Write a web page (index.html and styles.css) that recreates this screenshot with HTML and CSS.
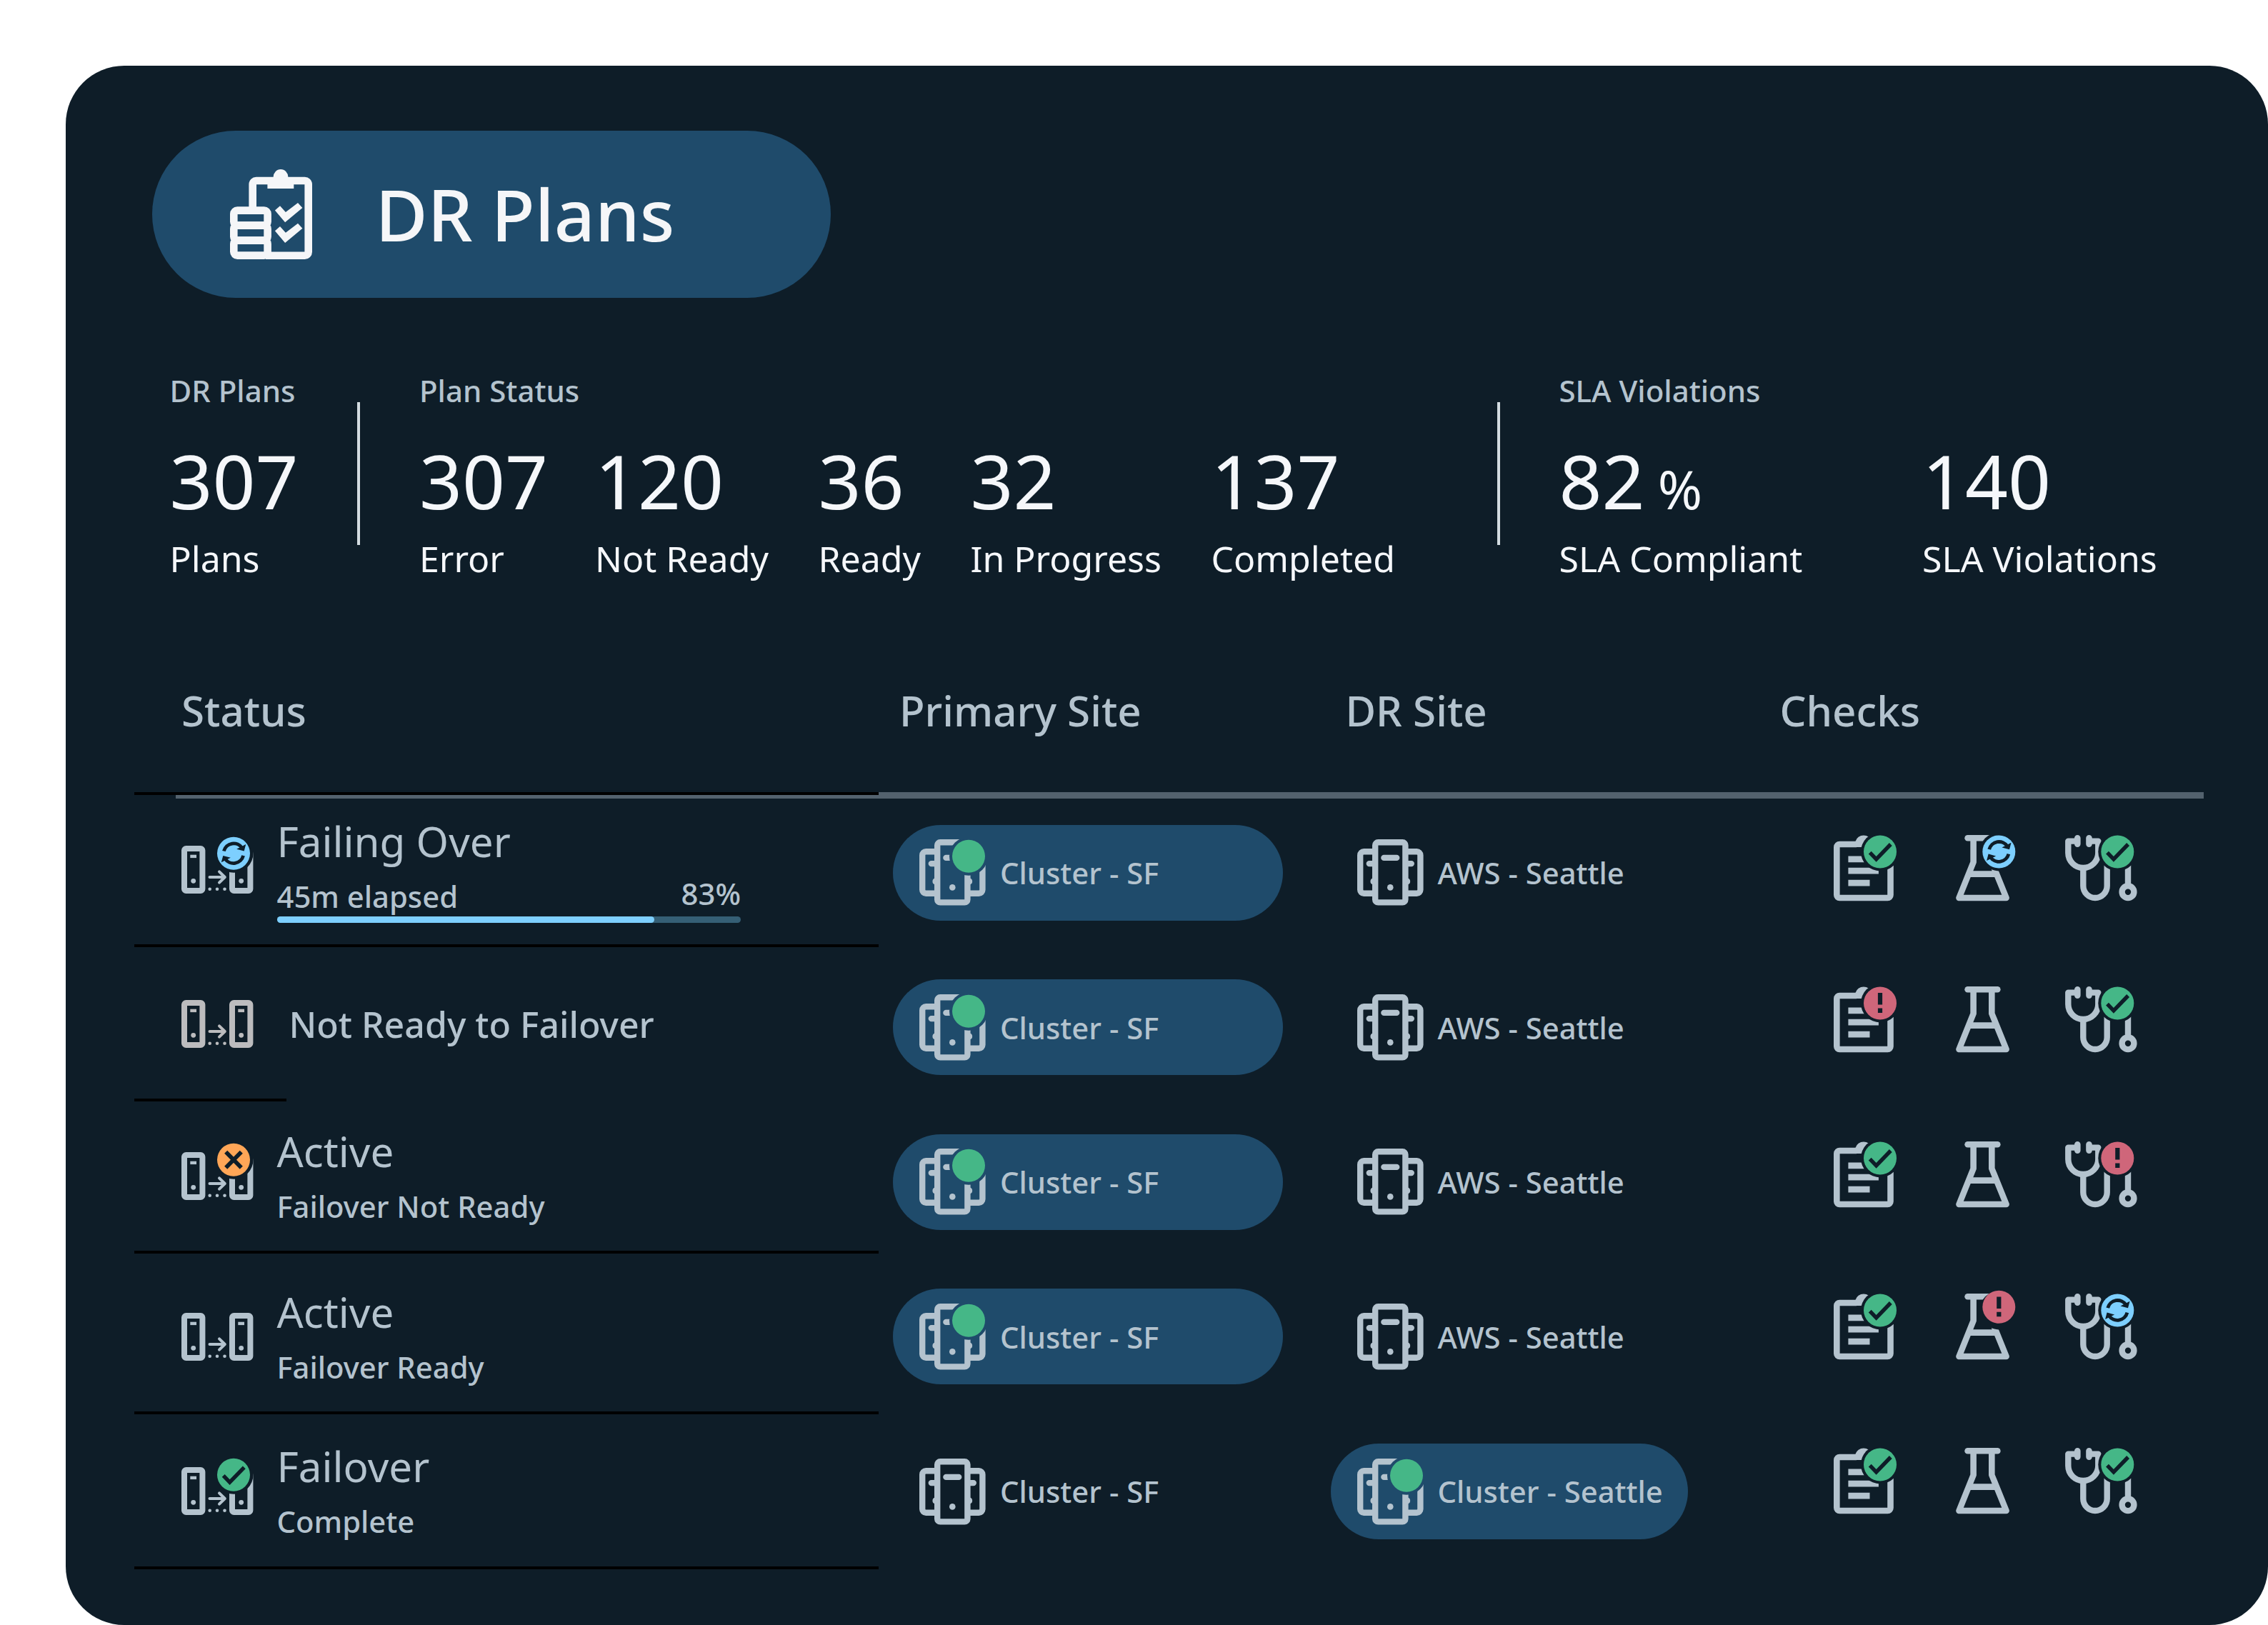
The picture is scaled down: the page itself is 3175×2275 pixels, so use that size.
FILE: index.html
```html
<!DOCTYPE html>
<html lang="en">
<head>
  <meta charset="UTF-8">
  <meta name="viewport" content="width=device-width, initial-scale=1.0">
  <title>DR Plans</title>
  <link rel="stylesheet" href="styles.css">
</head>
<body>
  <!-- icon definitions -->
  <svg class="defs" width="0" height="0">
    <defs>
      <mask id="cut-failover" maskUnits="userSpaceOnUse" x="-2" y="-16" width="106" height="90">
        <rect x="-2" y="-16" width="106" height="90" fill="white"/>
        <path d="M46.5 -16H104V-6L100.5 10.7A27 27 0 0 1 46.5 10.7Z" fill="black"/>
      </mask>
      <mask id="cut-cluster" maskUnits="userSpaceOnUse" x="-2" y="-2" width="98" height="98">
        <rect x="-2" y="-2" width="98" height="98" fill="white"/>
        <circle cx="69" cy="23.7" r="27" fill="black"/>
      </mask>
      <mask id="cut-clipboard" maskUnits="userSpaceOnUse" x="-2" y="-2" width="110" height="98">
        <rect x="-2" y="-2" width="110" height="98" fill="white"/>
        <circle cx="65" cy="23.4" r="27" fill="black"/>
      </mask>
      <mask id="cut-flask" maskUnits="userSpaceOnUse" x="-2" y="-2" width="110" height="98">
        <rect x="-2" y="-2" width="110" height="98" fill="white"/>
        <circle cx="60.3" cy="23.4" r="27" fill="black"/>
      </mask>
      <mask id="cut-steth" maskUnits="userSpaceOnUse" x="-2" y="-2" width="110" height="98">
        <rect x="-2" y="-2" width="110" height="98" fill="white"/>
        <circle cx="73.3" cy="23.4" r="27" fill="black"/>
      </mask>

      <g id="failover">
        <rect x="4" y="4" width="25.4" height="59" rx="2.5" fill="none" stroke="currentColor" stroke-width="8"/>
        <rect x="12.3" y="12.7" width="8.7" height="4.4" fill="currentColor"/>
        <circle cx="16.7" cy="49.3" r="3.4" fill="currentColor"/>
        <rect x="71" y="4" width="25.4" height="59" rx="2.5" fill="none" stroke="currentColor" stroke-width="8"/>
        <rect x="79.3" y="12.7" width="8.7" height="4.4" fill="currentColor"/>
        <circle cx="83.7" cy="49.3" r="3.4" fill="currentColor"/>
        <path d="M39.5 44H60M53 36.3L60.8 44L53 51.7" fill="none" stroke="currentColor" stroke-width="4" stroke-linecap="round" stroke-linejoin="round"/>
        <circle cx="39.7" cy="60.7" r="2.3" fill="currentColor"/>
        <circle cx="50" cy="60.7" r="2.3" fill="currentColor"/>
        <circle cx="60.5" cy="60.7" r="2.3" fill="currentColor"/>
      </g>
      <g id="cluster">
        <path d="M25 17.2H9.2A5 5 0 0 0 4.2 22.2V70.8A5 5 0 0 0 9.2 75.8H25M67.6 17.2H83.4A5 5 0 0 1 88.4 22.2V70.8A5 5 0 0 1 83.4 75.8H67.6" fill="none" stroke="currentColor" stroke-width="8.4"/>
        <rect x="25.2" y="4.2" width="42.2" height="84.2" rx="4" fill="none" stroke="currentColor" stroke-width="8.4"/>
        <rect x="33.2" y="21.7" width="26.2" height="8.4" rx="4.2" fill="currentColor"/>
        <circle cx="46.3" cy="67.4" r="4.3" fill="currentColor"/>
        <path d="M22 29.9H16.8A4.2 4.2 0 0 0 16.8 38.3H22ZM70.6 29.9H75.8A4.2 4.2 0 0 1 75.8 38.3H70.6ZM22 54.6A4.5 4.5 0 0 0 22 63.4ZM70.6 54.6A4.5 4.5 0 0 1 70.6 63.4Z" fill="currentColor"/>
      </g>
      <g id="clipboard">
        <path d="M32 13H8.4A4 4 0 0 0 4.3 17V84A4 4 0 0 0 8.4 88H75.4A4 4 0 0 0 79.5 84V17A4 4 0 0 0 75.4 13H50" fill="none" stroke="currentColor" stroke-width="8.6"/>
        <path d="M30.4 9A12 12 0 0 1 53.4 9V17H30Z" fill="currentColor"/>
        <path d="M20.4 33.8H62.9M20.4 50.2H62.9M20.4 67.1H50.5" fill="none" stroke="currentColor" stroke-width="8.8"/>
      </g>
      <g id="flask">
        <path d="M16.6 4.3H58.3" fill="none" stroke="currentColor" stroke-width="8.6" stroke-linecap="round"/>
        <path d="M24.6 4.3V38L4.5 88H70.6L50.3 38V4.3M20 54.6H55" fill="none" stroke="currentColor" stroke-width="8.6" stroke-linejoin="round"/>
      </g>
      <g id="steth">
        <path d="M17 8.6H4.3V25A21 21 0 0 0 46.3 25V8.6H33.6" fill="none" stroke="currentColor" stroke-width="8.4" stroke-linejoin="round"/>
        <path d="M17.3 4.3V12.6M33.5 4.3V12.6" fill="none" stroke="currentColor" stroke-width="8.6" stroke-linecap="round"/>
        <path d="M25.3 46V71.3A16.7 16.7 0 0 0 58.7 71.3V23A14.6 14.6 0 0 1 88 23V69" fill="none" stroke="currentColor" stroke-width="8.4"/>
        <circle cx="88" cy="79.7" r="8.4" fill="none" stroke="currentColor" stroke-width="8.4"/>
      </g>

      <g id="badge-ok">
        <circle r="23" fill="#45b787"/>
        <path d="M-14.3 1.2L-5.4 10.4L14.8 -10.4" fill="none" stroke="#0e1d28" stroke-width="5.4"/>
      </g>
      <g id="badge-alert">
        <circle r="23" fill="#cf667a"/>
        <path d="M0 -14.3V2.2M0 7V13.5" fill="none" stroke="#0e1d28" stroke-width="6.2"/>
      </g>
      <g id="badge-error">
        <circle r="23" fill="#ffa657"/>
        <path d="M-10.8 -11L10.8 11M10.8 -11L-10.8 11" fill="none" stroke="#0e1d28" stroke-width="5.8"/>
      </g>
      <g id="badge-sync">
        <circle r="23" fill="#7dcfff"/>
        <g id="sync-arrow">
          <path d="M-13.6 -3.2A14.2 14.2 0 0 1 12 -7.5" fill="none" stroke="#0e1d28" stroke-width="4.8"/>
          <path d="M17.2 -12.6L14.7 -3.2L4.2 -6Z" fill="#0e1d28"/>
        </g>
        <use href="#sync-arrow" transform="rotate(180)"/>
      </g>
    </defs>
  </svg>

  <main class="panel">
    <div class="title-pill">
      <svg class="title-icon" viewBox="0 0 115 126">
        <path d="M31.7 54V21A5 5 0 0 1 36.7 16H104.7A5 5 0 0 1 109.7 21V115.7A5 5 0 0 1 104.7 120.7H50" fill="none" stroke="currentColor" stroke-width="10.6"/>
        <path d="M60.6 11A10.4 11 0 0 1 81.4 11V16H89.3V27H52.4V16H60.6Z" fill="currentColor"/>
        <g fill="none" stroke="currentColor" stroke-width="10.6">
          <rect x="5.3" y="57.6" width="47.3" height="21" rx="5"/>
          <rect x="5.3" y="78.6" width="47.3" height="21" rx="5"/>
          <rect x="5.3" y="99.6" width="47.3" height="21" rx="5"/>
        </g>
        <path d="M62.9 57.5L70 51.3L77.9 60L95 47L101.4 54L77.1 74.3ZM62.9 86.2L70 80L77.9 88.7L95 75.7L101.4 82.7L77.1 103Z" fill="currentColor"/>
      </svg>
      <h1>DR Plans</h1>
    </div>

    <section class="stats">
      <div class="group">
        <h2>DR Plans</h2>
        <div class="figures">
          <div class="figure w-plans"><strong>307</strong><span>Plans</span></div>
        </div>
      </div>
      <div class="divider"></div>
      <div class="group">
        <h2>Plan Status</h2>
        <div class="figures">
          <div class="figure w-error"><strong>307</strong><span>Error</span></div>
          <div class="figure w-notready"><strong>120</strong><span>Not Ready</span></div>
          <div class="figure w-ready"><strong>36</strong><span>Ready</span></div>
          <div class="figure w-progress"><strong>32</strong><span>In Progress</span></div>
          <div class="figure w-completed"><strong>137</strong><span>Completed</span></div>
        </div>
      </div>
      <div class="divider"></div>
      <div class="group">
        <h2>SLA Violations</h2>
        <div class="figures">
          <div class="figure w-sla"><strong>82<small>%</small></strong><span>SLA Compliant</span></div>
          <div class="figure"><strong>140</strong><span>SLA Violations</span></div>
        </div>
      </div>
    </section>

    <section class="table">
      <div class="columns head">
        <div class="th-status">Status</div>
        <div class="th-primary">Primary Site</div>
        <div class="th-dr">DR Site</div>
        <div class="th-checks">Checks</div>
      </div>
      <div class="rule">
        <div class="rule-left"></div>
        <div class="rule-right"></div>
      </div>

      <div class="columns">
        <div class="status-col">
          <div class="status failing">
            <svg class="failover-icon" viewBox="0 -14 101 82">
              <use href="#failover" mask="url(#cut-failover)"/>
              <use href="#badge-sync" x="73" y="10.7"/>
            </svg>
            <div class="status-text">
              <h3>Failing Over</h3>
              <p class="elapsed"><span>45m elapsed</span><span class="percent">83%</span></p>
              <div class="progress"><div class="bar" style="width: 81.4%"></div></div>
            </div>
          </div>
          <div class="status not-ready">
            <svg class="failover-icon" viewBox="0 -14 101 82"><use href="#failover"/></svg>
            <p class="single">Not Ready to Failover</p>
          </div>
          <div class="status active-blocked">
            <svg class="failover-icon" viewBox="0 -14 101 82">
              <use href="#failover" mask="url(#cut-failover)"/>
              <use href="#badge-error" x="73" y="10.7"/>
            </svg>
            <div class="status-text">
              <h3>Active</h3>
              <p>Failover Not Ready</p>
            </div>
          </div>
          <div class="status active-ready">
            <svg class="failover-icon" viewBox="0 -14 101 82"><use href="#failover"/></svg>
            <div class="status-text">
              <h3>Active</h3>
              <p>Failover Ready</p>
            </div>
          </div>
          <div class="status complete">
            <svg class="failover-icon" viewBox="0 -14 101 82">
              <use href="#failover" mask="url(#cut-failover)"/>
              <use href="#badge-ok" x="73" y="10.7"/>
            </svg>
            <div class="status-text">
              <h3>Failover</h3>
              <p>Complete</p>
            </div>
          </div>
        </div>

        <div class="site-col primary">
          <div class="site current">
            <svg viewBox="0 0 92.6 92.6"><use href="#cluster" mask="url(#cut-cluster)"/><circle cx="69" cy="23.7" r="23" fill="#45b787"/></svg>
            <span>Cluster - SF</span>
          </div>
          <div class="site current">
            <svg viewBox="0 0 92.6 92.6"><use href="#cluster" mask="url(#cut-cluster)"/><circle cx="69" cy="23.7" r="23" fill="#45b787"/></svg>
            <span>Cluster - SF</span>
          </div>
          <div class="site current">
            <svg viewBox="0 0 92.6 92.6"><use href="#cluster" mask="url(#cut-cluster)"/><circle cx="69" cy="23.7" r="23" fill="#45b787"/></svg>
            <span>Cluster - SF</span>
          </div>
          <div class="site current">
            <svg viewBox="0 0 92.6 92.6"><use href="#cluster" mask="url(#cut-cluster)"/><circle cx="69" cy="23.7" r="23" fill="#45b787"/></svg>
            <span>Cluster - SF</span>
          </div>
          <div class="site">
            <svg viewBox="0 0 92.6 92.6"><use href="#cluster"/></svg>
            <span>Cluster - SF</span>
          </div>
        </div>

        <div class="site-col dr">
          <div class="site">
            <svg viewBox="0 0 92.6 92.6"><use href="#cluster"/></svg>
            <span>AWS - Seattle</span>
          </div>
          <div class="site">
            <svg viewBox="0 0 92.6 92.6"><use href="#cluster"/></svg>
            <span>AWS - Seattle</span>
          </div>
          <div class="site">
            <svg viewBox="0 0 92.6 92.6"><use href="#cluster"/></svg>
            <span>AWS - Seattle</span>
          </div>
          <div class="site">
            <svg viewBox="0 0 92.6 92.6"><use href="#cluster"/></svg>
            <span>AWS - Seattle</span>
          </div>
          <div class="site current">
            <svg viewBox="0 0 92.6 92.6"><use href="#cluster" mask="url(#cut-cluster)"/><circle cx="69" cy="23.7" r="23" fill="#45b787"/></svg>
            <span>Cluster - Seattle</span>
          </div>
        </div>

        <div class="checks-col">
          <div class="checks">
            <svg viewBox="0 0 104 93"><use href="#clipboard" mask="url(#cut-clipboard)"/><use href="#badge-ok" x="65" y="23.4"/></svg>
            <svg viewBox="0 0 104 93"><use href="#flask" mask="url(#cut-flask)"/><use href="#badge-sync" x="60.3" y="23.4"/></svg>
            <svg viewBox="0 0 104 93"><use href="#steth" mask="url(#cut-steth)"/><use href="#badge-ok" x="73.3" y="23.4"/></svg>
          </div>
          <div class="checks">
            <svg viewBox="0 0 104 93"><use href="#clipboard" mask="url(#cut-clipboard)"/><use href="#badge-alert" x="65" y="23.4"/></svg>
            <svg viewBox="0 0 104 93"><use href="#flask"/></svg>
            <svg viewBox="0 0 104 93"><use href="#steth" mask="url(#cut-steth)"/><use href="#badge-ok" x="73.3" y="23.4"/></svg>
          </div>
          <div class="checks">
            <svg viewBox="0 0 104 93"><use href="#clipboard" mask="url(#cut-clipboard)"/><use href="#badge-ok" x="65" y="23.4"/></svg>
            <svg viewBox="0 0 104 93"><use href="#flask"/></svg>
            <svg viewBox="0 0 104 93"><use href="#steth" mask="url(#cut-steth)"/><use href="#badge-alert" x="73.3" y="23.4"/></svg>
          </div>
          <div class="checks">
            <svg viewBox="0 0 104 93"><use href="#clipboard" mask="url(#cut-clipboard)"/><use href="#badge-ok" x="65" y="23.4"/></svg>
            <svg viewBox="0 0 104 93"><use href="#flask" mask="url(#cut-flask)"/><use href="#badge-alert" x="60.3" y="18.8"/></svg>
            <svg viewBox="0 0 104 93"><use href="#steth" mask="url(#cut-steth)"/><use href="#badge-sync" x="73.3" y="23.4"/></svg>
          </div>
          <div class="checks">
            <svg viewBox="0 0 104 93"><use href="#clipboard" mask="url(#cut-clipboard)"/><use href="#badge-ok" x="65" y="23.4"/></svg>
            <svg viewBox="0 0 104 93"><use href="#flask"/></svg>
            <svg viewBox="0 0 104 93"><use href="#steth" mask="url(#cut-steth)"/><use href="#badge-ok" x="73.3" y="23.4"/></svg>
          </div>
        </div>
      </div>
    </section>
  </main>
</body>
</html>
```

FILE: styles.css
```css
* {
  box-sizing: border-box;
}

body {
  margin: 0;
  background: #fff;
  font-family: "Noto Sans", sans-serif;
  color: #b4c3ce;
  overflow: hidden;
}

h1, h2, h3, p {
  margin: 0;
  font-weight: 500;
}

svg {
  display: block;
  flex: none;
  overflow: visible;
}

.defs {
  position: absolute;
}

.panel {
  display: flow-root;
  width: 3083.5px;
  height: 2183.5px;
  margin: 91.5px 0 0 91.5px;
  padding-top: 91.5px;
  background: #0e1d28;
  border-radius: 82px;
}

.title-pill {
  display: flex;
  align-items: center;
  width: 950px;
  height: 234px;
  margin-left: 121.5px;
  padding-left: 108.5px;
  border-radius: 117px;
  background: #1f4b6b;
  color: #f5f6f8;
}

.title-icon {
  width: 115px;
  height: 126px;
}

.title-pill h1 {
  margin: 0 0 3px 89px;
  font-size: 100px;
  line-height: 120px;
}

/* summary numbers */
.stats {
  display: flex;
  margin: 105px 0 0 146px;
  height: 290px;
}

.group h2 {
  font-size: 42px;
  line-height: 50px;
  margin-bottom: 51px;
}

.figures {
  display: flex;
  color: #f5f7fa;
}

.figure strong {
  display: block;
  font-size: 105px;
  font-weight: 400;
  line-height: 100px;
  margin-bottom: 29px;
  white-space: nowrap;
}

.figure small {
  font-size: 75px;
  line-height: 1;
  margin-left: 18px;
}

.figure span {
  display: block;
  font-size: 50px;
  line-height: 60px;
  white-space: nowrap;
}

.w-plans { width: 262.5px; }
.w-error { width: 246px; }
.w-notready { width: 312.5px; }
.w-ready { width: 213px; }
.w-progress { width: 337px; }
.w-completed { width: 400px; }
.w-sla { width: 508.5px; }

.divider {
  width: 4px;
  height: 200px;
  margin: 41px 83px 0 0;
  background: #d3dce1;
}

/* plans table */
.table {
  margin: 148px 0 0 96px;
}

.columns {
  display: grid;
  grid-template-columns: 1042px 633px 628px 594px;
}

.head {
  height: 148.5px;
  font-size: 58.3px;
  font-weight: 500;
  line-height: 70px;
}

.th-status { padding-left: 66.5px; }
.th-primary { padding-left: 29.5px; }
.th-dr { padding-left: 21px; }
.th-checks { padding-left: 1px; }

.rule {
  display: flex;
  height: 9px;
}

.rule-left {
  width: 1042px;
  border-top: 4px solid #000;
  background: linear-gradient(#53626e, #53626e) 58px 0 / 984px 5px no-repeat;
}

.rule-right {
  width: 1855px;
  background: #53626e;
}

.status {
  display: flex;
  gap: 32.5px;
  padding-left: 66.5px;
  background: linear-gradient(#000, #000) left bottom / 100% 4px no-repeat;
}

.failover-icon {
  width: 101px;
  height: 82px;
  margin-top: 22px;
}

.failing { height: 208px; padding-top: 25.5px; }
.not-ready { height: 216.5px; padding-top: 60.5px; background-size: 213px 4px; }
.active-blocked { height: 213px; padding-top: 34.7px; }
.active-ready { height: 224.5px; padding-top: 47px; }
.complete { height: 217px; padding-top: 38.5px; }

.failing .failover-icon {
  margin-top: 26.5px;
}

.not-ready .failover-icon {
  margin-top: 0;
  color: #bcbcbe;
}

.status-text {
  width: 649.5px;
}

.status-text h3 {
  margin-bottom: 17px;
  font-size: 58.3px;
  font-weight: 400;
  line-height: 70px;
}

.status-text p {
  font-size: 41.8px;
  line-height: 50px;
}

.elapsed {
  display: flex;
  justify-content: space-between;
}

.percent {
  margin-top: -4px;
}

.single {
  margin: 12.5px 0 0 17px;
  font-size: 50px;
  line-height: 70px;
}

.progress {
  height: 9px;
  margin-top: 3px;
  border-radius: 4.5px;
  background: #355f75;
}

.bar {
  height: 100%;
  border-radius: 4.5px;
  background: #7dcfff;
}

.site-col {
  display: flex;
  flex-direction: column;
  gap: 82.6px;
  padding-top: 37px;
}

.primary {
  padding-left: 20.5px;
}

.site {
  display: flex;
  align-items: center;
  gap: 20px;
  width: 546px;
  height: 134px;
  padding-left: 37.4px;
  border-radius: 67px;
  font-size: 41.8px;
  font-weight: 500;
  white-space: nowrap;
}

.dr .site {
  width: 500px;
}

.site.current {
  background: #1f4b6b;
}

.site svg {
  width: 92.6px;
  height: 92.6px;
}

.checks-col {
  display: grid;
  grid-template-rows: 212.7px 216.4px 213px 216.6px 93px;
  align-content: start;
  padding: 51.3px 0 0 76px;
}

.checks {
  display: grid;
  grid-template-columns: 171.1px 153.8px 104px;
}

.checks svg {
  width: 104px;
  height: 93px;
}
```
